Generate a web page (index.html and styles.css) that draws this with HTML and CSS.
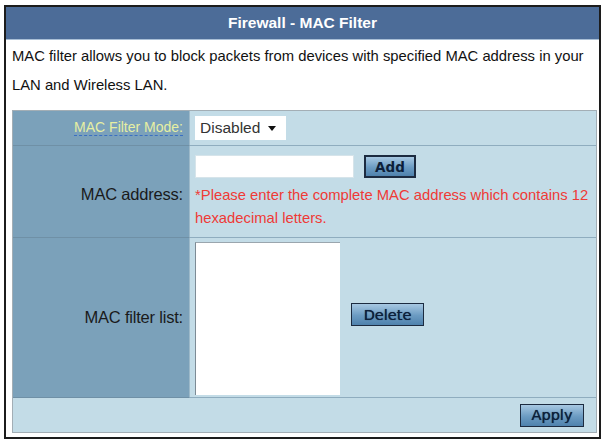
FILE: index.html
```html
<!DOCTYPE html>
<html>
<head>
<meta charset="utf-8">
<link rel="stylesheet" href="styles.css">
</head>
<body>
<div class="panel">
  <div class="title">Firewall - MAC Filter</div>
  <div class="desc">MAC filter allows you to block packets from devices with specified MAC address in your LAN and Wireless LAN.</div>
  <div class="grid">
    <div class="lab row1"><span class="hint">MAC Filter Mode:</span></div>
    <div class="val row1">
      <div class="select"><span>Disabled</span><span class="arrow"></span></div>
    </div>
    <div class="lab row2 big">MAC address:</div>
    <div class="val row2 col">
      <div class="line"><div class="input"></div><button class="btn add">Add</button></div>
      <div class="warn">*Please enter the complete MAC address which contains 12 hexadecimal letters.</div>
    </div>
    <div class="lab row3 big">MAC filter list:</div>
    <div class="val row3 mid">
      <div class="list"></div><button class="btn del">Delete</button>
    </div>
    <div class="foot"><button class="btn apply">Apply</button></div>
  </div>
</div>
</body>
</html>
```
FILE: styles.css
```css
html, body { margin: 0; padding: 0; background: #fff; }
body { font-family: "Liberation Sans", Arial, sans-serif; font-size: 14px; }
.panel {
  margin: 5px 0 0 4px;
  width: 593px;
  height: 430px;
  border: 2px solid #1c1c1c;
  box-sizing: content-box;
}
.title {
  height: 33px;
  line-height: 32px;
  background: #4c6c98;
  border-bottom: 1px solid #a9bfd6;
  color: #fff;
  font-weight: bold;
  font-size: 15.5px;
  text-align: center;
  box-sizing: border-box;
}
.desc {
  padding: 2px 8px 0 6px;
  line-height: 29px;
  color: #111;
  font-size: 14.8px;
}
.grid {
  margin: 10px 0 0 6px;
  width: 585px;
  border: 1px solid #a3aeb5;
  box-sizing: border-box;
  display: grid;
  grid-template-columns: 177px 1fr;
  grid-template-rows: 35px 92px 160px 34px;
}
.lab {
  background: #7ba1ba;
  display: flex;
  align-items: center;
  justify-content: flex-end;
  padding-right: 6px;
  color: #1a1a1a;
  border-bottom: 1px solid #6f90a6;
  border-right: 1px solid #9db9c9;
}
.big { font-size: 16.5px; letter-spacing: -0.2px; }
.row2.big { padding-top: 6px; }
.val {
  background: #c3dce7;
  border-bottom: 1px solid #8fadbf;
  display: flex;
  align-items: center;
  padding-left: 5px;
}
.hint {
  color: #e7efa2;
  border-bottom: 1px dashed #3a6fc2;
  line-height: 15px;
}
.select {
  width: 91px;
  height: 24px;
  background: #fff;
  display: flex;
  align-items: center;
  justify-content: space-between;
  padding: 0 10px 0 5px;
  box-sizing: border-box;
  color: #333;
  font-size: 15.5px;
}
.arrow {
  width: 0; height: 0;
  border-left: 4px solid transparent;
  border-right: 4px solid transparent;
  border-top: 5px solid #111;
}
.col { flex-direction: column; align-items: flex-start; justify-content: flex-start; padding-top: 9px; }
.line { display: flex; align-items: center; gap: 10px; }
.input { width: 159px; height: 23px; background: #fff; border: 1px solid #d6e4ea; box-sizing: border-box; }
.warn { color: #ef3a36; line-height: 23px; margin-top: 6px; width: 400px; font-size: 14.8px; }
.btn {
  font-family: "DejaVu Sans", Verdana, sans-serif;
  font-weight: normal;
  font-size: 14.5px;
  color: #0d1f3a;
  border: 1px solid #1c2b40;
  background: linear-gradient(#a7c8e2, #6b9bc2 55%, #4f82ad);
  padding: 0;
  height: 23px;
  box-sizing: border-box;
  border-radius: 0;
  text-shadow: 0 0 0.7px #0d1f3a;
}
.add { width: 52px; border-width: 2px; font-weight: bold; font-size: 13.5px; text-shadow: none; }
.mid { align-items: flex-start; padding-top: 4px; }
.list { width: 145px; height: 153px; background: #fff; border-left: 1px solid #7d8b95; border-top: 1px solid #9aa6ae; box-sizing: border-box; }
.del { width: 73px; margin: 61px 0 0 11px; }
.foot {
  grid-column: 1 / 3;
  background: #c3dce7;
  display: flex;
  justify-content: flex-end;
  align-items: center;
  padding-right: 12px;
}
.apply { width: 64px; }
```
